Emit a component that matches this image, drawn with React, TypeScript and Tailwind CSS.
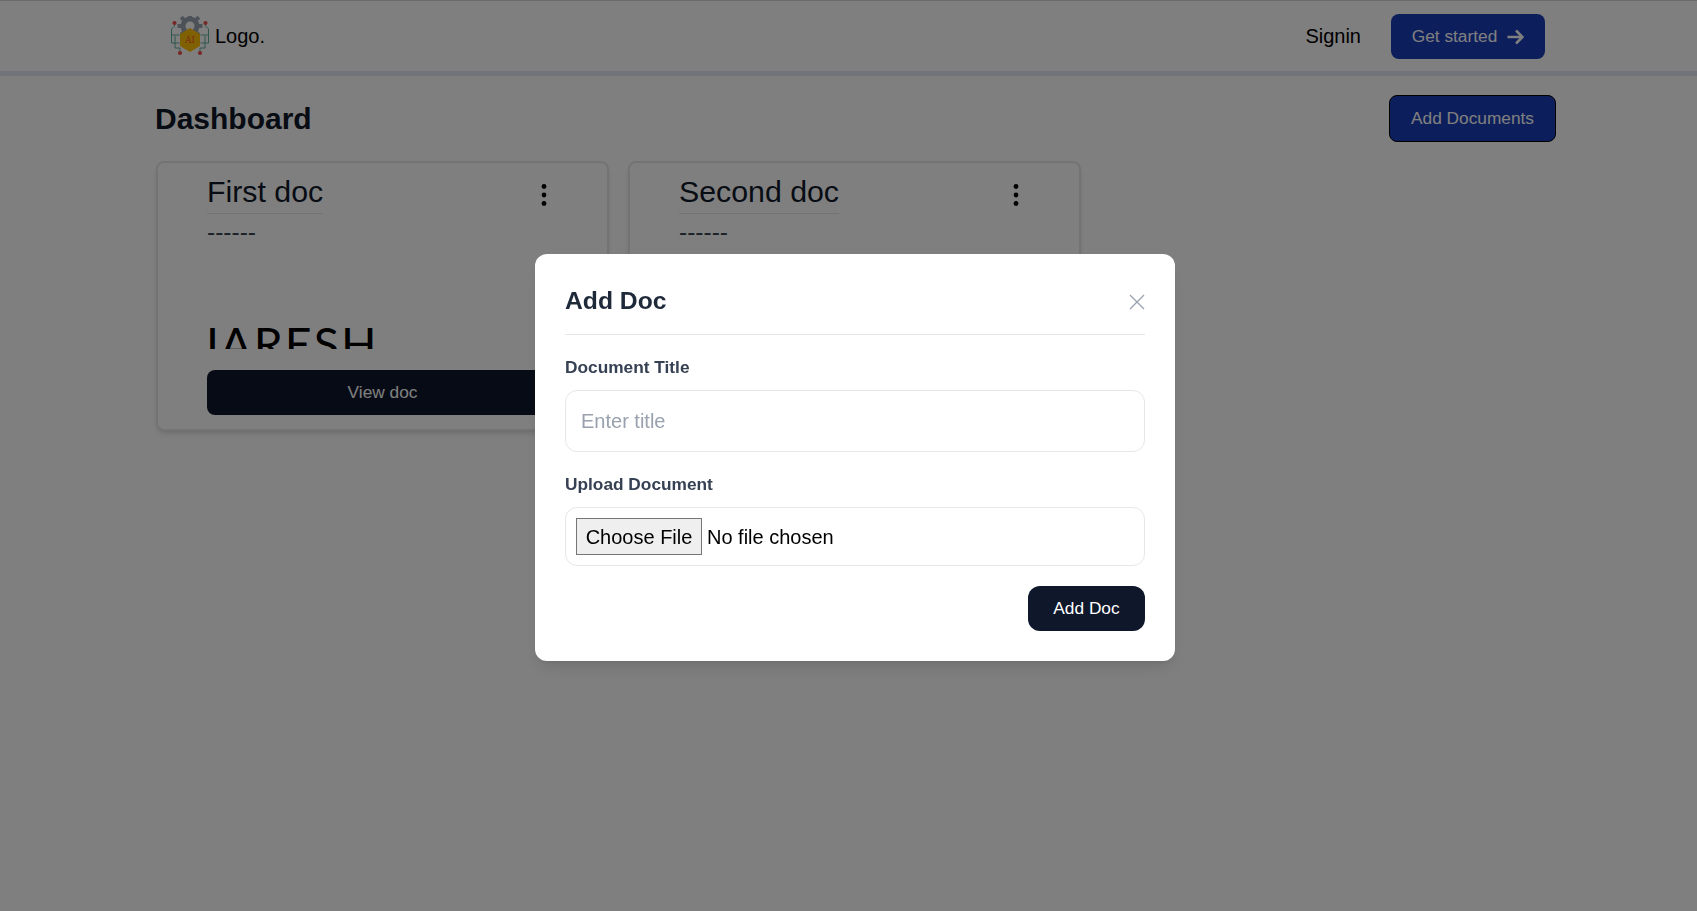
function LogoMark() {
  const teeth = [0, 45, 90, 135, 180, 225, 270, 315];
  return (
    <svg width="42" height="42" viewBox="9 11 42 42" fill="none">
      {/* circuit traces */}
      <g stroke="#4fa58f" strokeWidth="0.9">
        <path d="M14.5 18v3l-3 3v14h8" />
        <path d="M45.5 18v3l3 3v14h-8" />
        <path d="M20 48v-5h-5v-12" />
        <path d="M40 48v-5h5v-12" />
        <path d="M11.5 30h8" />
        <path d="M48.5 30h-8" />
      </g>
      {/* gear */}
      <g fill="#9aa5b1">
        {teeth.map((deg) => (
          <rect key={deg} x="28" y="8.5" width="4" height="5" transform={`rotate(${deg} 30 21)`} />
        ))}
        <circle cx="30" cy="21" r="9.5" />
      </g>
      <circle cx="30" cy="21" r="4.5" fill="#ffffff" />
      {/* shield */}
      <path d="M30 23l10 6v12l-10 6-10-6v-12z" fill="#ffc107" />
      <text x="30" y="38" textAnchor="middle" fontSize="8.5" fontFamily="'DejaVu Serif', serif" fill="#ff4a2a">
        AI
      </text>
      <g fill="#f04f4f">
        <circle cx="14.5" cy="18" r="2.1" />
        <circle cx="45.5" cy="18" r="2.1" />
        <circle cx="20" cy="48" r="2.1" />
        <circle cx="40" cy="48" r="2.1" />
      </g>
    </svg>
  );
}

function DocCard({ title }: { title: string }) {
  return (
    <div className="h-[270px] rounded-lg border-2 border-gray-200 bg-white px-[49px] pt-[10px] shadow-md">
      <div className="flex items-start justify-between">
        <h3 className="h-[41px] border-b border-gray-200 text-[30.3px] leading-[38px] text-gray-900">{title}</h3>
        <svg width="24" height="24" viewBox="0 0 24 24" className="mt-[10px] mr-[2px] text-black" fill="currentColor">
          <circle cx="12" cy="3.5" r="2.4" />
          <circle cx="12" cy="12" r="2.4" />
          <circle cx="12" cy="20.5" r="2.4" />
        </svg>
      </div>
      <p className="mt-[3px] text-[24.5px] leading-[30px] text-gray-700">------</p>
      <div className="mt-[41px] h-[61px] overflow-hidden">
        <p className="-ml-[8px] pt-[27px] font-['Lato',sans-serif] text-[46.5px] leading-[56px] tracking-[2px] text-black">JARESH</p>
      </div>
      <button className="mt-[21px] h-[45px] w-full rounded-lg bg-slate-900 text-[17.3px] text-white">View doc</button>
    </div>
  );
}

export default function App() {
  return (
    <div className="min-h-[911px] bg-white font-['Liberation_Sans',Arial,sans-serif]">
      <header className="h-[76px] border-t border-b-[5px] border-t-gray-300 border-b-[#e2e8f0]">
        <div className="ml-[155px] flex h-[71px] w-[1390px] items-center justify-between pl-[14px]">
          <div className="flex items-center gap-[4px]">
            <LogoMark />
            <span className="-mt-[2px] text-xl text-black">Logo.</span>
          </div>
          <div className="flex items-center gap-[30px]">
            <a className="-mt-[2px] text-xl text-black">Signin</a>
            <button className="flex h-[45px] w-[154px] items-center justify-center gap-[9px] rounded-lg bg-blue-800 text-[17.3px] text-white">
              Get started
              <svg width="18" height="18" viewBox="0 0 18 18" fill="none" stroke="currentColor" strokeWidth="2.5">
                <path d="M1.5 9h15M10 2.5 16.5 9 10 15.5" />
              </svg>
            </button>
          </div>
        </div>
      </header>

      <main className="ml-[155px] w-[1401px] pt-[19px]">
        <div className="flex items-center justify-between">
          <h1 className="text-3xl font-bold text-gray-900">Dashboard</h1>
          <button className="h-[47px] w-[167px] rounded-lg border border-black bg-blue-800 text-[17.3px] text-white">
            Add Documents
          </button>
        </div>
        <div className="mt-[19px] ml-[1px] grid grid-cols-[repeat(3,453px)] gap-[19px]">
          <DocCard title="First doc" />
          <DocCard title="Second doc" />
        </div>
      </main>

      {/* Add doc modal */}
      <div className="fixed inset-0 flex items-center justify-center bg-black/50 pt-[4px] pl-[13px]">
        <div className="w-[640px] rounded-xl bg-white p-[30px] shadow-lg">
          <div className="flex h-[51px] items-start justify-between border-b border-gray-200">
            <h2 className="-mt-[1px] text-[24.7px] leading-[36px] font-semibold text-gray-800">Add Doc</h2>
            <button className="mt-[10px] text-gray-400">
              <svg width="16" height="16" viewBox="0 0 16 16" fill="none" stroke="currentColor" strokeWidth="1.3">
                <path d="M1 1l14 14M15 1 1 15" />
              </svg>
            </button>
          </div>
          <form>
            <label className="mt-5 block text-[17.3px] leading-6 font-semibold text-gray-700">Document Title</label>
            <input
              type="text"
              placeholder="Enter title"
              className="mt-[11px] h-[62px] w-full rounded-xl border border-gray-200 px-[15px] text-xl outline-none placeholder:text-gray-400"
            />
            <label className="mt-5 block text-[17.3px] leading-6 font-semibold text-gray-700">Upload Document</label>
            <div className="mt-[11px] flex h-[59px] items-center rounded-xl border border-gray-200 pl-[10px]">
              <input
                type="file"
                className="w-full text-xl text-black file:mr-[5px] file:h-[37px] file:w-[126px] file:border file:border-[#767676] file:bg-[#efefef] file:text-xl"
              />
            </div>
            <div className="mt-5 flex justify-end">
              <button type="button" className="h-[45px] w-[117px] rounded-xl bg-slate-900 text-[17.3px] font-medium text-white">
                Add Doc
              </button>
            </div>
          </form>
        </div>
      </div>
    </div>
  );
}
